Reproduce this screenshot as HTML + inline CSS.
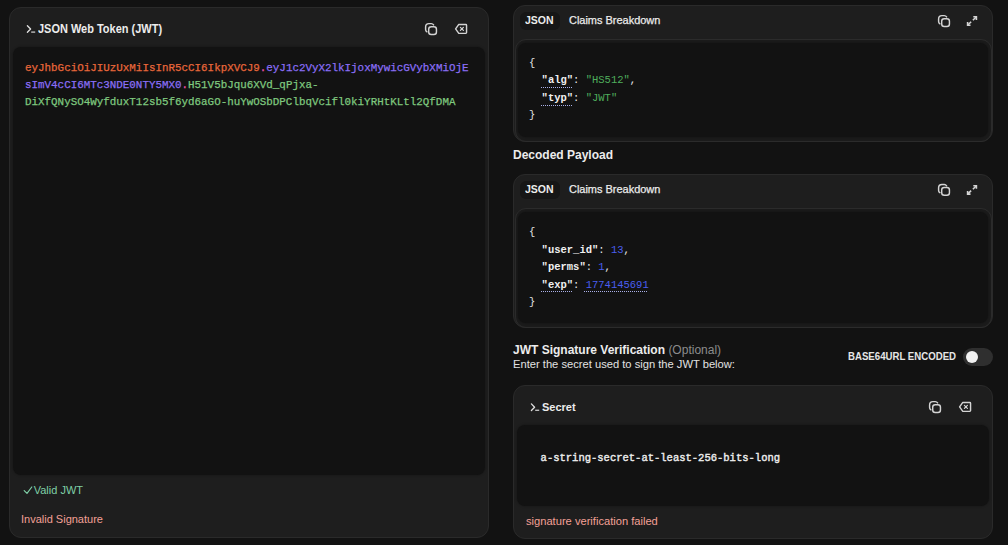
<!DOCTYPE html>
<html><head><meta charset="utf-8">
<style>
*{box-sizing:border-box;margin:0;padding:0}
html,body{width:1008px;height:545px;overflow:hidden;background:#121212;font-family:"Liberation Sans",sans-serif;color:#e6e6e6}
.abs{position:absolute}
.panel{position:absolute;background:#1e1e1e;border:1px solid #2a2a2a;border-radius:12px}
.inner{position:absolute;background:#121212;border-radius:8px;box-shadow:0 0 2px 1px rgba(0,0,0,0.18)}
.ring{position:absolute;background:#1b1b1b;border:1px solid #2b2b2b;border-radius:11px}
.t{position:absolute;white-space:pre;line-height:1;transform-origin:0 0}
.mono{font-family:"Liberation Mono",monospace}
.b{font-weight:bold}
.tab{position:absolute;background:#161616;border-radius:6px}
svg{position:absolute;overflow:visible}
.ic{fill:none;stroke:#d4d4d4;stroke-linecap:round;stroke-linejoin:round}
.k{color:#f0f0f0;font-weight:bold}
.u{position:absolute;height:0;border-top:1px dotted #a9b0e8}
</style></head><body>

<!-- LEFT PANEL -->
<div class="panel" style="left:9px;top:7px;width:480px;height:531px"></div>
<svg style="left:0;top:0" width="1008" height="545">
  <path class="ic" style="stroke:#e0e0e0;stroke-width:1.3" d="M27.4 25.7 L30.6 29 L27.4 32.3"/>
  <path class="ic" style="stroke:#bdbdbd;stroke-width:1.4;stroke-linecap:butt" d="M31.2 32.1 H35.2"/>
</svg>
<div class="t b" style="left:38px;top:22.8px;font-size:12px;color:#ececec;transform:scaleX(0.915)">JSON Web Token (JWT)</div>
<!-- copy icon left -->

<div class="inner" style="left:13px;top:47px;width:472px;height:428px"></div>
<div class="t mono" style="left:24.8px;top:58.9px;font-size:11.5px;transform:scaleX(0.945);line-height:17px;-webkit-text-stroke:0.25px currentColor"><span style="color:#e8673a">eyJhbGciOiJIUzUxMiIsInR5cCI6IkpXVCJ9</span><span style="color:#f752b0">.</span><span style="color:#8a6ef6">eyJ1c2VyX2lkIjoxMywicGVybXMiOjE</span>
<span style="color:#8a6ef6">sImV4cCI6MTc3NDE0NTY5MX0</span><span style="color:#f752b0">.</span><span style="color:#7fc97f">H51V5bJqu6XVd_qPjxa-</span>
<span style="color:#7fc97f">DiXfQNySO4WyfduxT12sb5f6yd6aGO-huYwOSbDPClbqVcifl0kiYRHtKLtl2QfDMA</span></div>
<svg style="left:0;top:0" width="1008" height="545"><path class="ic" style="stroke:#7fcfa6;stroke-width:1.2" d="M24.2 490.6 L27 493.4 L31.8 487"/></svg>
<div class="t" style="left:33.7px;top:485.3px;font-size:11px;color:#7fcfa6">Valid JWT</div>
<div class="t" style="left:21px;top:513.6px;font-size:11px;color:#f3a096">Invalid Signature</div>

<!-- RIGHT PANEL 1 -->
<div class="panel" style="left:513px;top:5px;width:480px;height:137px"></div>
<div class="tab" style="left:520px;top:12px;width:40px;height:18px"></div>
<div class="t b" style="left:525px;top:14.3px;font-size:11.6px;color:#ececec;transform:scaleX(0.905)">JSON</div>
<div class="t" style="left:569px;top:14.3px;font-size:11.6px;color:#ececec;transform:scaleX(0.945);-webkit-text-stroke:0.25px #ececec">Claims Breakdown</div>
<div class="ring" style="left:515px;top:39px;width:477px;height:103px"></div>
<div class="inner" style="left:518px;top:43px;width:470px;height:94px"></div>
<div class="t mono" style="left:529px;top:54.9px;font-size:11.3px;transform:scaleX(0.929);line-height:17.5px;color:#e6e6e6">{
  <span class="k">"alg"</span>: <span style="color:#4fae5c">"HS512"</span>,
  <span class="k">"typ"</span>: <span style="color:#4fae5c">"JWT"</span>
}</div>
<div class="u" style="left:541px;top:87px;width:31px"></div>
<div class="u" style="left:541px;top:105px;width:31px"></div>

<div class="t b" style="left:513px;top:148.7px;font-size:12px;color:#ececec">Decoded Payload</div>

<!-- RIGHT PANEL 2 -->
<div class="panel" style="left:513px;top:174px;width:480px;height:154px"></div>
<div class="tab" style="left:520px;top:181px;width:40px;height:18px"></div>
<div class="t b" style="left:525px;top:183.3px;font-size:11.6px;color:#ececec;transform:scaleX(0.905)">JSON</div>
<div class="t" style="left:569px;top:183.3px;font-size:11.6px;color:#ececec;transform:scaleX(0.945);-webkit-text-stroke:0.25px #ececec">Claims Breakdown</div>
<div class="ring" style="left:515px;top:208px;width:477px;height:120px"></div>
<div class="inner" style="left:518px;top:212px;width:470px;height:111px"></div>
<div class="t mono" style="left:529px;top:224.3px;font-size:11.3px;transform:scaleX(0.929);line-height:17.5px;color:#e6e6e6">{
  <span class="k">"user_id"</span>: <span style="color:#4a5ef0">13</span>,
  <span class="k">"perms"</span>: <span style="color:#4a5ef0">1</span>,
  <span class="k">"exp"</span>: <span style="color:#4a5ef0">1774145691</span>
}</div>
<div class="u" style="left:541px;top:291px;width:31px"></div>
<div class="u" style="left:584px;top:291px;width:63px"></div>

<div class="t b" style="left:513px;top:343.6px;font-size:12px;color:#ececec">JWT Signature Verification <span style="color:#8c8c8c;font-weight:normal">(Optional)</span></div>
<div class="t" style="left:513px;top:358.5px;font-size:11px;color:#e2e2e2;transform:scaleX(1.015)">Enter the secret used to sign the JWT below:</div>
<div class="t b" style="left:848px;top:352.2px;font-size:10px;color:#e6e6e6;transform:scaleX(0.964)">BASE64URL ENCODED</div>
<div class="abs" style="left:963px;top:348px;width:30px;height:18px;border-radius:9px;background:#2f2f2f"></div>
<div class="abs" style="left:965.7px;top:350.7px;width:12.6px;height:12.6px;border-radius:50%;background:#f2f2f2"></div>

<!-- RIGHT PANEL 3 -->
<div class="panel" style="left:513px;top:385px;width:480px;height:154px"></div>
<svg style="left:0;top:0" width="1008" height="545">
  <path class="ic" style="stroke:#e0e0e0;stroke-width:1.3" d="M531.4 403.9 L534.6 407.2 L531.4 410.5"/>
  <path class="ic" style="stroke:#bdbdbd;stroke-width:1.4;stroke-linecap:butt" d="M535.2 410.3 H539.2"/>
</svg>
<div class="t b" style="left:542px;top:401.8px;font-size:11px;color:#ececec">Secret</div>
<div class="inner" style="left:517px;top:425px;width:472px;height:81px"></div>
<div class="t mono" style="left:540.6px;top:452.9px;font-size:10.5px;color:#ececec;-webkit-text-stroke:0.4px #ececec">a-string-secret-at-least-256-bits-long</div>
<div class="t" style="left:526px;top:515.5px;font-size:11px;color:#f3a096;transform:scaleX(1.012)">signature verification failed</div>

<svg style="left:0;top:0" width="1008" height="545"><g class="ic" style="stroke-width:1.45"><g transform="translate(431,28.9)"><rect x="-2.3" y="-2.25" width="7.75" height="7.75" rx="2.5"/><path d="M-4.1 2.9Q-5.4 2.1-5.4 0.6V-2Q-5.4-5.3-2.1-5.3H0.3Q1.8-5.3 2.6-4"/></g><g transform="translate(461,28.9)"><path d="M-5.4 0L-2.2-4.45H4.8Q5.55-4.45 5.55-3.7V3.7Q5.55 4.45 4.8 4.45H-2.2Z"/><path style="stroke-width:1.25" d="M-0.6-1.5L2.4 1.5M2.4-1.5L-0.6 1.5"/></g><g transform="translate(944,20.9)"><rect x="-2.3" y="-2.25" width="7.75" height="7.75" rx="2.5"/><path d="M-4.1 2.9Q-5.4 2.1-5.4 0.6V-2Q-5.4-5.3-2.1-5.3H0.3Q1.8-5.3 2.6-4"/></g><g transform="translate(944,189.8)"><rect x="-2.3" y="-2.25" width="7.75" height="7.75" rx="2.5"/><path d="M-4.1 2.9Q-5.4 2.1-5.4 0.6V-2Q-5.4-5.3-2.1-5.3H0.3Q1.8-5.3 2.6-4"/></g><g transform="translate(935,406.9)"><rect x="-2.3" y="-2.25" width="7.75" height="7.75" rx="2.5"/><path d="M-4.1 2.9Q-5.4 2.1-5.4 0.6V-2Q-5.4-5.3-2.1-5.3H0.3Q1.8-5.3 2.6-4"/></g><g transform="translate(965,406.9)"><path d="M-5.4 0L-2.2-4.45H4.8Q5.55-4.45 5.55-3.7V3.7Q5.55 4.45 4.8 4.45H-2.2Z"/><path style="stroke-width:1.25" d="M-0.6-1.5L2.4 1.5M2.4-1.5L-0.6 1.5"/></g></g><g class="ic" style="stroke-width:1.6"><g transform="translate(972,20.9)" style="stroke-linejoin:miter;stroke-linecap:butt"><path d="M1.3-4.1H4.4V-1"/><path d="M4.4-4.1L0.9-0.6"/><path d="M-1.5 4.3H-4.4V1.2"/><path d="M-4.4 4.3L-0.9 0.8"/></g><g transform="translate(972,189.8)" style="stroke-linejoin:miter;stroke-linecap:butt"><path d="M1.3-4.1H4.4V-1"/><path d="M4.4-4.1L0.9-0.6"/><path d="M-1.5 4.3H-4.4V1.2"/><path d="M-4.4 4.3L-0.9 0.8"/></g></g></svg>
</body></html>
